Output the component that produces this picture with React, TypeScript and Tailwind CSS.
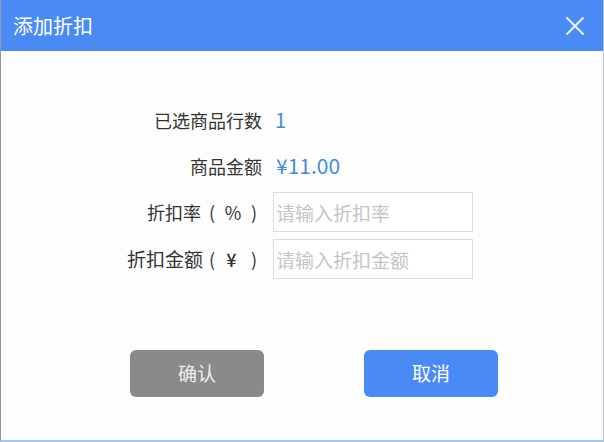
export default function App() {
  const font = { fontFamily: '"Noto Sans CJK SC", "Noto Sans", sans-serif' };
  const inputCls =
    "ml-[16px] w-[200px] h-[40px] border border-[#d3dde8] bg-white px-[2px] text-[19px] outline-none placeholder:text-[#c4c4c4]";
  return (
    <div
      className="w-[604px] h-[442px] bg-[#fdfdfd] flex flex-col border-l border-r border-b-2 border-l-[#8d9cad] border-r-[#b9c2cc] border-b-[#a9c5e8] overflow-hidden"
      style={font}
    >
      {/* header */}
      <div className="h-[51px] shrink-0 bg-[#4a8af4] flex items-center justify-between pl-[12px] pr-[18px]">
        <span className="text-white text-[20px] leading-none">添加折扣</span>
        <svg width="20" height="20" viewBox="0 0 20 20" className="text-white/90">
          <path d="M2 2L18 18M18 2L2 18" stroke="currentColor" strokeWidth="2" strokeLinecap="round" />
        </svg>
      </div>

      {/* form */}
      <div className="flex flex-col gap-[6px] pt-[49px]">
        <div className="flex items-center h-[40px]">
          <div className="w-[261px] text-right text-[18px] text-[#333]">已选商品行数</div>
          <div className="ml-[13px] text-[20px] text-[#3d8de0]">1</div>
        </div>
        <div className="flex items-center h-[40px]">
          <div className="w-[261px] text-right text-[18px] text-[#333]">商品金额</div>
          <div className="ml-[14px] text-[21px] text-[#3d8de0]">¥11.00</div>
        </div>
        <div className="flex items-center h-[40px]">
          <div className="w-[256px] flex justify-end items-center text-[18px] text-[#333]">
            <span>折扣率</span>
            <span className="ml-[8px] w-[48px] flex justify-between">
              <span>(</span>
              <span>%</span>
              <span>)</span>
            </span>
          </div>
          <input className={inputCls} placeholder="请输入折扣率" style={font} />
        </div>
        <div className="flex items-center h-[40px] mt-[1px]">
          <div className="w-[256px] flex justify-end items-center text-[18px] text-[#333]">
            <span className="text-[19px]">折扣金额</span>
            <span className="ml-[6px] w-[48px] flex justify-between">
              <span>(</span>
              <span className="pr-[3px] font-medium">¥</span>
              <span>)</span>
            </span>
          </div>
          <input className={inputCls} placeholder="请输入折扣金额" style={font} />
        </div>
      </div>

      {/* buttons */}
      <div className="flex gap-[100px] pl-[129px] mt-[71px]">
        <button className="w-[134px] h-[47px] rounded-[6px] bg-[#8a8a8a] text-[#f0f0f0] text-[19px]">确认</button>
        <button className="w-[134px] h-[47px] rounded-[6px] bg-[#4a8af4] text-white text-[19px]">取消</button>
      </div>
    </div>
  );
}
